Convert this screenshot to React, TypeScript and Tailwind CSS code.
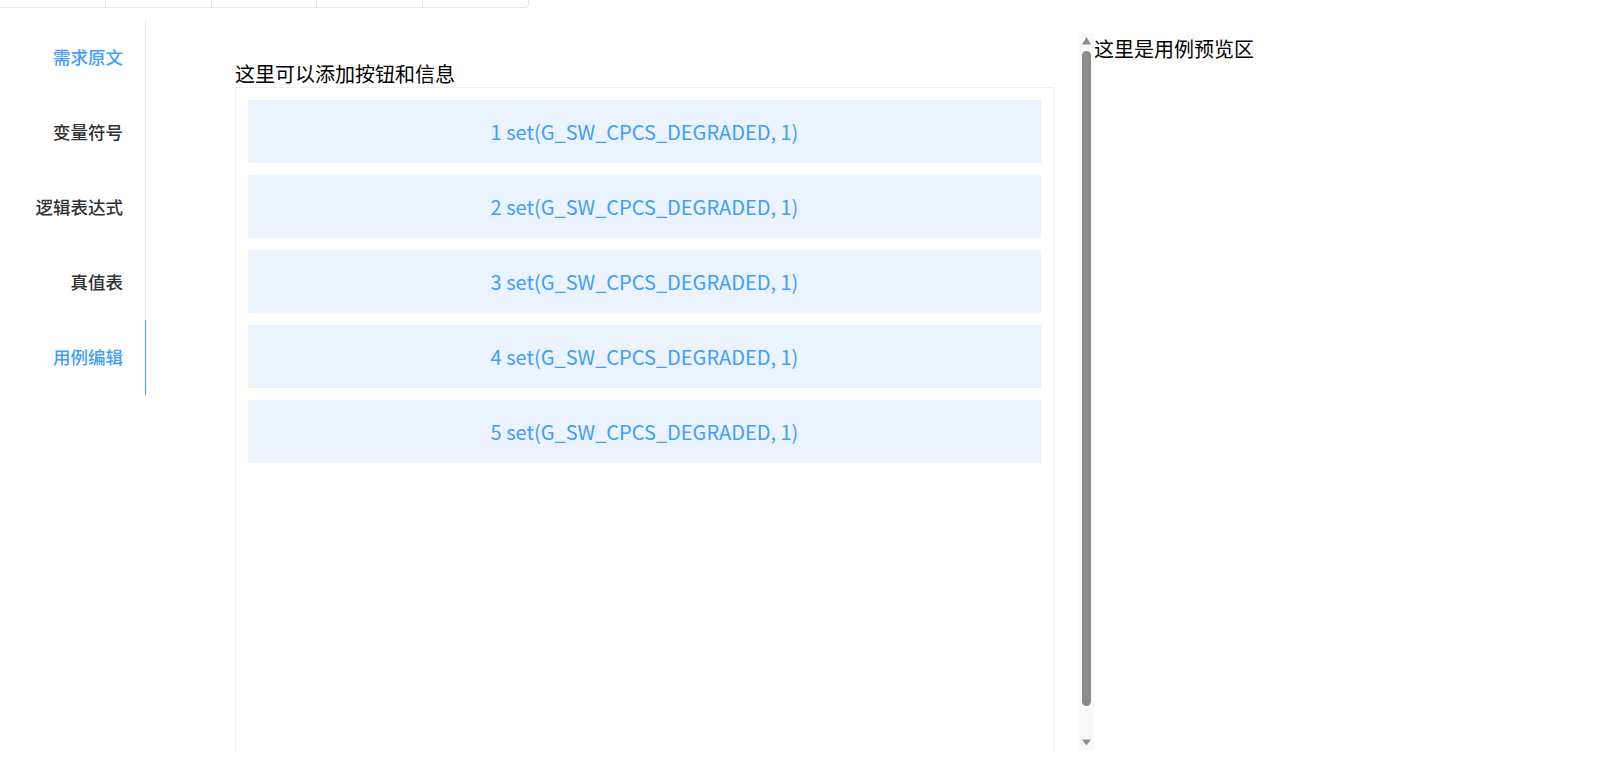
const TABS = ["", "", "", "", ""];

const NAV_ITEMS = [
  { id: "source", label: "需求原文", color: "text-[#409eff]", active: false },
  { id: "vars", label: "变量符号", color: "text-[#303133]", active: false },
  { id: "logic", label: "逻辑表达式", color: "text-[#303133]", active: false },
  { id: "truth", label: "真值表", color: "text-[#303133]", active: false },
  { id: "cases", label: "用例编辑", color: "text-[#409eff]", active: true },
];

const STEPS = [1, 2, 3, 4, 5].map((n) => `${n} set(G_SW_CPCS_DEGRADED, 1)`);

function ScrollArrow({ up }: { up?: boolean }) {
  return (
    <svg width="15" height="15" viewBox="0 0 15 15" className="block">
      <polygon
        points={up ? "7.5,4 12,11.5 3,11.5" : "3,4.5 12,4.5 7.5,10.5"}
        fill="#8f8f8f"
      />
    </svg>
  );
}

// fake classic scrollbar, the headless page hides the native one
function ScrollBar() {
  return (
    <div className="flex h-full w-[15px] shrink-0 flex-col bg-[#f9f9f9]">
      <ScrollArrow up />
      <div className="mx-[3px] mt-[3px] h-[655px] rounded-full bg-[#8b8b8b]" />
      <div className="flex-1" />
      <ScrollArrow />
    </div>
  );
}

export default function App() {
  return (
    <div
      className="h-[759px] w-full overflow-hidden bg-white"
      style={{ fontFamily: '"Noto Sans CJK SC", "Noto Sans", sans-serif' }}
    >
      {/* tab strip, mostly scrolled away */}
      <div className="flex h-[8px] w-[529px] rounded-br-[4px] border-r border-b border-[#e4e7ed]">
        {TABS.map((_, i) => (
          <div
            key={i}
            className={`h-full flex-1 ${i > 0 ? "border-l border-[#e4e7ed]" : ""}`}
          />
        ))}
      </div>

      <div className="mt-[12px] flex items-start">
        <nav className="flex w-[146px] shrink-0 flex-col">
          {NAV_ITEMS.map(({ id, label, color, active }) => (
            <div
              key={id}
              className={`flex h-[75px] items-center justify-end pr-[22px] text-[17.5px] font-medium ${color} border-r ${
                active ? "border-[#409eff]" : "border-[#e4e7ed]"
              }`}
            >
              {label}
            </div>
          ))}
        </nav>

        <div className="mt-[13px] flex h-[717px] w-[948px] shrink-0">
          <div className="flex-1 overflow-hidden pl-[89px] pr-[25px]">
            <div className="pt-[28px] text-[20px] leading-[26px] text-black">
              这里可以添加按钮和信息
            </div>
            <div className="h-[696px] border border-[#f0f0f2] p-[12px]">
              <div className="flex flex-col gap-[12px]">
                {STEPS.map((s) => (
                  <div
                    key={s}
                    className="flex h-[63px] items-center justify-center bg-[#ebf3fe] text-[20px] text-[#409eff]"
                  >
                    {s}
                  </div>
                ))}
              </div>
            </div>
          </div>
          <ScrollBar />
        </div>

        <div className="mt-[15px] text-[20px] leading-[28px] text-black">
          这里是用例预览区
        </div>
      </div>
    </div>
  );
}
